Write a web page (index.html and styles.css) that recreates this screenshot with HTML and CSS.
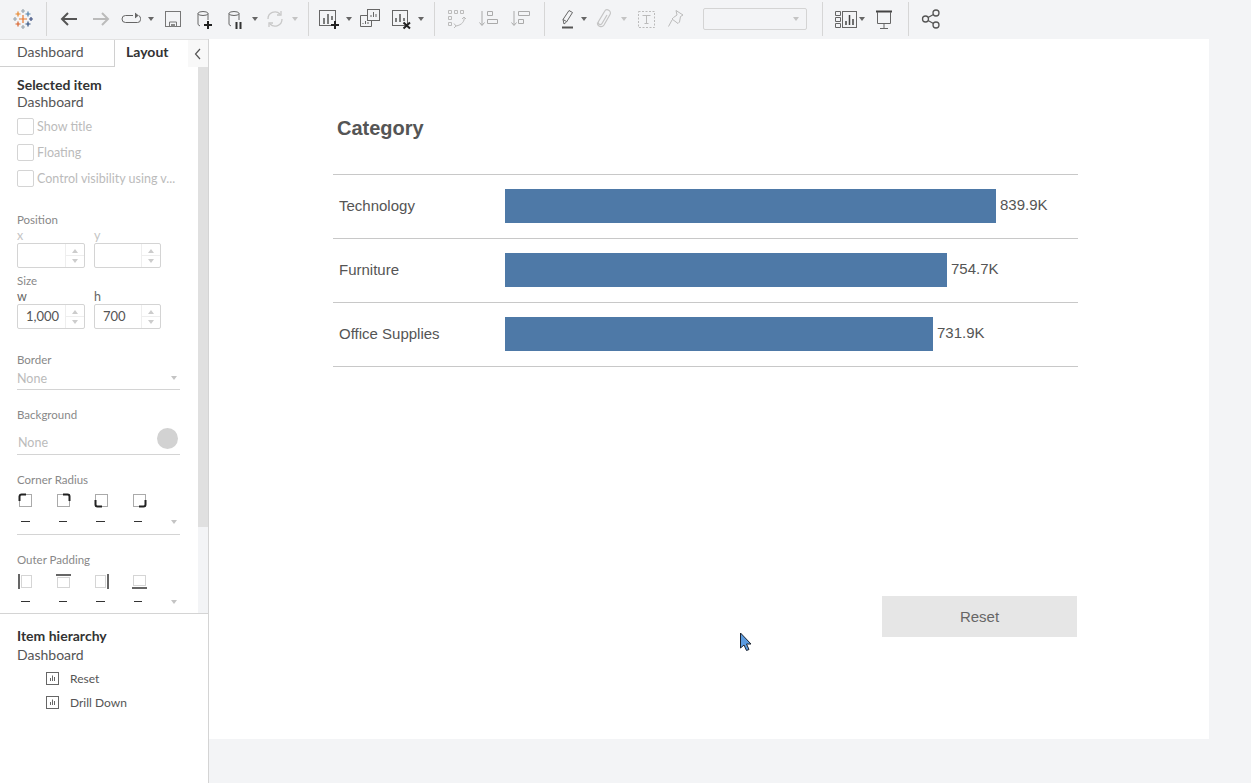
FILE: index.html
```html
<!DOCTYPE html>
<html lang="en">
<head>
    <meta charset="UTF-8">
    <title>Tableau Dashboard Layout</title>
    <link rel="stylesheet" href="styles.css">
</head>
<body>
    <!-- Top toolbar -->
    <div class="toolbar">
        <svg class="icon" viewBox="0 0 24 24" fill="none" stroke-width="1.2">
            <path d="M12 8v8M8 12h8" stroke="#e8762c"/>
            <path d="M12 2v4M10 4h4" stroke="#9aa5ad"/>
            <path d="M7 4.500v5M4.500 7h5" stroke="#e8862c"/>
            <path d="M17 4.500v5M14.500 7h5" stroke="#4f7fa8"/>
            <path d="M20 10v4M18 12h4" stroke="#3c4f80"/>
            <path d="M17 14.500v5M14.500 17h5" stroke="#2f4f7f"/>
            <path d="M12 18v4M10 20h4" stroke="#9aa5ad"/>
            <path d="M7 14.500v5M4.500 17h5" stroke="#d9622b"/>
            <path d="M4 10v4M2 12h4" stroke="#9aa5ad"/>
        </svg>
        <span class="sep"></span>
        <svg class="icon" viewBox="0 0 24 24" fill="none" stroke="#555" stroke-width="2"><path d="M20 12H5M11 6l-6 6 6 6"/></svg>
        <svg class="icon" viewBox="0 0 24 24" fill="none" stroke="#bbb" stroke-width="2"><path d="M4 12h15M13 6l6 6-6 6"/></svg>
        <svg class="icon" viewBox="0 0 24 24" fill="none" stroke="#666"><path d="M14 8.500H6.500a3.500 3.500 0 0 0 0 7h12a3 3 0 0 0 3-3v-1a3 3 0 0 0-2-3"/><path d="M16 6l3 2.500-3 2.500" fill="#666"/></svg>
        <span class="caret"></span>
        <svg class="icon" viewBox="0 0 24 24" fill="none" stroke="#777"><rect x="4.500" y="4.500" width="15" height="15"/><path d="M8.500 19.500v-4.500h7v4.500"/><path d="M10 17h4v2.500h-4z" fill="#888" stroke="none"/></svg>
        <svg class="icon" viewBox="0 0 24 24" fill="none" stroke="#666"><ellipse cx="11" cy="6.500" rx="5" ry="2"/><path d="M6 6.500v11l2 1.500M16 6.500V13"/><path d="M16 14v8M12 18h8" stroke="#222" stroke-width="2"/></svg>
        <svg class="icon" viewBox="0 0 24 24" fill="none" stroke="#666"><ellipse cx="11" cy="6.500" rx="5" ry="2"/><path d="M6 6.500v11l2 1.500M16 6.500V13"/><path d="M13.500 15v7M17.500 15v7" stroke="#333" stroke-width="2"/></svg>
        <span class="caret"></span>
        <svg class="icon" viewBox="0 0 24 24" fill="none" stroke="#c8c8c8" stroke-width="1.300"><path d="M5 12a7 7 0 0 1 12-5M19 12a7 7 0 0 1-12 5"/><path d="M14 8h4V4M10 16H6v4"/></svg>
        <span class="caret off"></span>
        <span class="sep"></span>
        <svg class="icon" viewBox="0 0 24 24" fill="none" stroke="#666"><rect x="2.500" y="3.500" width="16" height="15"/><path d="M7 11v6M11 7v10M15 9v4" stroke="#555" stroke-width="1.500"/><path d="M18 14v8M14 18h8" stroke="#222" stroke-width="2"/></svg>
        <span class="caret"></span>
        <svg class="icon" viewBox="0 0 24 24" fill="none" stroke="#666"><rect x="9.500" y="2.500" width="12" height="11" fill="#f3f4f6"/><path d="M13 10V8M15.500 10V5M18 10V7"/><path d="M9 8.500H2.500v11h11V14"/><path d="M5 17v-1M7.500 17v-3M10 17v-2"/></svg>
        <svg class="icon" viewBox="0 0 24 24" fill="none" stroke="#666"><rect x="3.500" y="3.500" width="15" height="15"/><path d="M7 15v-4M11 15V7M15 14v-3" stroke="#555" stroke-width="1.500"/><path d="M14.500 15.500l6.500 6M21 15.500l-6.500 6" stroke="#222" stroke-width="2"/></svg>
        <span class="caret"></span>
        <span class="sep"></span>
        <svg class="icon" viewBox="0 0 24 24" fill="none" stroke="#bbb"><path d="M4.500 3.500h3v3h-3zM10.500 3.500h3v3h-3zM16.500 3.500h3v3h-3zM4.500 9.500h3v3h-3zM4.500 15.500h3v3h-3z"/><path d="M20 10c1 4-2 8-8 9M10 16.500l2 2.500-2 2M18 12l2-2 2 2"/></svg>
        <svg class="icon" viewBox="0 0 24 24" fill="none" stroke="#aaa"><path d="M6 4v14M3.500 15.500L6 18.500l2.500-3"/><path d="M11.500 4.500h5v4h-5zM11.500 12.500h10v4h-10z"/></svg>
        <svg class="icon" viewBox="0 0 24 24" fill="none" stroke="#aaa"><path d="M6 4v14M3.500 15.500L6 18.500l2.500-3"/><path d="M10.500 4.500h11v4h-11zM10.500 12.500h5v4h-5z"/></svg>
        <span class="sep"></span>
        <svg class="icon" viewBox="0 0 24 24" fill="none" stroke="#666"><path d="M9 17l-1-4.500 6-9 3.500 2-6 9.500zM8 12.500l3.500 2"/><path d="M7 20.500h11" stroke="#555" stroke-width="2"/></svg>
        <span class="caret"></span>
        <svg class="icon" viewBox="0 0 24 24" fill="none" stroke="#c4c4c4" stroke-width="1.200"><path d="M15 8l-5 8.500a2 2 0 0 1-3.500-2l6-10a3 3 0 0 1 5.500 3l-6 10.500c-2 3-7 1.500-6.500-2.500"/></svg>
        <span class="caret off"></span>
        <svg class="icon" viewBox="0 0 24 24" fill="none" stroke="#bbb"><rect x="4.500" y="4.500" width="16" height="16" stroke-dasharray="2 1.500"/><path d="M8.500 8.500h8M12.500 8.500v8M10.500 16.500h4"/></svg>
        <svg class="icon" viewBox="0 0 24 24" fill="none" stroke="#bbb"><path d="M12 3.500l7 4.500-2.500 1.500-1 5.500-1.500 1.500-6-4.500 1.500-1.500 3.500-2.500zM8 13l-3.500 6.500"/></svg>
        <div class="combo"><span class="caret off"></span></div>
        <span class="sep"></span>
        <svg class="icon" viewBox="0 0 24 24" fill="none" stroke="#666"><path d="M1.500 4.500h5v4h-5zM1.500 10.500h5v4h-5zM1.500 16.500h5v4h-5z"/><rect x="8.500" y="4.500" width="14" height="16"/><path d="M12 18v-4M15.500 18V8M19 18v-6" stroke="#444" stroke-width="1.500"/></svg>
        <span class="caret"></span>
        <svg class="icon" viewBox="0 0 24 24" fill="none" stroke="#666"><path d="M4 4.500h16" stroke="#444" stroke-width="2"/><path d="M5.500 5v11.500h13V5M12 16.500V22M8 21.500h8"/></svg>
        <span class="sep"></span>
        <svg class="icon" viewBox="0 0 24 24" fill="none" stroke="#555" stroke-width="1.300"><circle cx="6.500" cy="12" r="3"/><circle cx="17" cy="6" r="3"/><circle cx="17" cy="18" r="3"/><path d="M9 10.500l5.500-3M9 13.500l5.500 3"/></svg>
    </div>

    <div class="workspace">
        <!-- Left panel -->
        <aside class="sidebar">
            <div class="tabs">
                <div class="tab">Dashboard</div>
                <div class="tab active">Layout</div>
                <div class="collapse">
                    <svg width="8" height="12" viewBox="0 0 8 12" fill="none" stroke="#555" stroke-width="1.200"><path d="M6 1L1.500 6 6 11"/></svg>
                </div>
            </div>

            <div class="panel">
                <div class="panel-body">
                    <div class="heading">Selected item</div>
                    <div class="item-name">Dashboard</div>

                    <label class="check">Show title</label>
                    <label class="check">Floating</label>
                    <label class="check">Control visibility using v...</label>

                    <div class="group-label position-label">Position</div>
                    <div class="fields">
                        <div class="field">
                            <span class="axis off">x</span>
                            <div class="stepper"></div>
                        </div>
                        <div class="field">
                            <span class="axis off">y</span>
                            <div class="stepper"></div>
                        </div>
                    </div>
                    <div class="group-label size-label">Size</div>
                    <div class="fields">
                        <div class="field">
                            <span class="axis">w</span>
                            <div class="stepper">1,000</div>
                        </div>
                        <div class="field">
                            <span class="axis">h</span>
                            <div class="stepper">700</div>
                        </div>
                    </div>

                    <div class="group-label border-label">Border</div>
                    <div class="select-line border-line">None<span class="caret off"></span></div>

                    <div class="group-label background-label">Background</div>
                    <div class="select-line background-line">None<span class="swatch"></span></div>

                    <div class="group-label radius-label">Corner Radius</div>
                    <div class="sides radius-icons">
                        <svg class="side" viewBox="0 0 15 15" fill="none"><rect x="1.500" y="1.500" width="12" height="12" stroke="#555" stroke-dasharray="1 1"/><path d="M1.500 8V3.500a2 2 0 0 1 2-2H8" stroke="#222" stroke-width="2"/></svg>
                        <svg class="side" viewBox="0 0 15 15" fill="none"><rect x="1.500" y="1.500" width="12" height="12" stroke="#555" stroke-dasharray="1 1"/><path d="M7 1.500h4.500a2 2 0 0 1 2 2V8" stroke="#222" stroke-width="2"/></svg>
                        <svg class="side" viewBox="0 0 15 15" fill="none"><rect x="1.500" y="1.500" width="12" height="12" stroke="#555" stroke-dasharray="1 1"/><path d="M1.500 7v4.500a2 2 0 0 0 2 2H8" stroke="#222" stroke-width="2"/></svg>
                        <svg class="side" viewBox="0 0 15 15" fill="none"><rect x="1.500" y="1.500" width="12" height="12" stroke="#555" stroke-dasharray="1 1"/><path d="M7 13.500h4.500a2 2 0 0 0 2-2V7" stroke="#222" stroke-width="2"/></svg>
                    </div>
                    <div class="dashes radius-dashes">
                        <span class="dash"></span><span class="dash"></span><span class="dash"></span><span class="dash"></span><span class="caret off"></span>
                    </div>

                    <div class="group-label padding-label">Outer Padding</div>
                    <div class="sides padding-icons">
                        <svg class="side" viewBox="0 0 15 15" fill="none"><rect x="3.500" y="1.500" width="10" height="12" stroke="#aaa" stroke-dasharray="1 1"/><path d="M1 0v15" stroke="#666" stroke-width="2"/></svg>
                        <svg class="side" viewBox="0 0 15 15" fill="none"><rect x="1.500" y="3.500" width="12" height="10" stroke="#aaa" stroke-dasharray="1 1"/><path d="M0 1h15" stroke="#666" stroke-width="2"/></svg>
                        <svg class="side" viewBox="0 0 15 15" fill="none"><rect x="1.500" y="1.500" width="10" height="12" stroke="#aaa" stroke-dasharray="1 1"/><path d="M14 0v15" stroke="#666" stroke-width="2"/></svg>
                        <svg class="side" viewBox="0 0 15 15" fill="none"><rect x="1.500" y="1.500" width="12" height="10" stroke="#aaa" stroke-dasharray="1 1"/><path d="M0 14h15" stroke="#666" stroke-width="2"/></svg>
                    </div>
                    <div class="dashes padding-dashes">
                        <span class="dash"></span><span class="dash"></span><span class="dash"></span><span class="dash"></span><span class="caret off"></span>
                    </div>
                </div>
                <div class="scrollbar"><div class="thumb"></div></div>
            </div>

            <div class="hierarchy">
                <div class="heading">Item hierarchy</div>
                <div class="item-name">Dashboard</div>
                <div class="tree-item">
                    <svg class="sheet" viewBox="0 0 13 13" fill="none" stroke="#666"><rect x="0.500" y="0.500" width="12" height="12"/><path d="M4.500 9V6M6.500 9V3.500M8.500 9V5"/></svg>
                    Reset
                </div>
                <div class="tree-item">
                    <svg class="sheet" viewBox="0 0 13 13" fill="none" stroke="#666"><rect x="0.500" y="0.500" width="12" height="12"/><path d="M4.500 9V6M6.500 9V3.500M8.500 9V5"/></svg>
                    Drill Down
                </div>
            </div>
        </aside>

        <!-- Dashboard canvas -->
        <main class="stage">
            <div class="canvas">
                <h1 class="chart-title">Category</h1>
                <div class="chart">
                    <div class="row">
                        <div class="row-label">Technology</div>
                        <div class="bar" style="width: 491px"></div>
                        <div class="value">839.9K</div>
                    </div>
                    <div class="row">
                        <div class="row-label">Furniture</div>
                        <div class="bar" style="width: 442px"></div>
                        <div class="value">754.7K</div>
                    </div>
                    <div class="row">
                        <div class="row-label">Office Supplies</div>
                        <div class="bar" style="width: 428px"></div>
                        <div class="value">731.9K</div>
                    </div>
                </div>
                <div class="reset-button">Reset</div>
                <svg class="pointer" width="14" height="20" viewBox="0 0 14 20"><path d="M1.500 1v15l3.500-3 2.500 5.500 2.500-1-2.500-5.500h4.500z" fill="#5b9be0" stroke="#1c2430"/></svg>
            </div>
        </main>
    </div>
</body>
</html>
```

FILE: styles.css
```css
* {
    box-sizing: border-box;
}

body {
    margin: 0;
    height: 783px;
    overflow: hidden;
    background-color: #f3f4f6;
    font-family: 'Lato', sans-serif;
    font-size: 14px;
    color: #444;
}

/* Toolbar */
.toolbar {
    display: grid;
    grid-template-columns: 35px 11px 32px 30px 28px 14px 31px 31px 28px 12px 28px 17px 9px 28px 13px 31px 28px 17px 10px 32px 32px 36px 11px 25px 12px 28px 14px 30px 39px 119px 12px 24px 14px 36px 11px 24px;
    align-items: center;
    justify-items: start;
    height: 39px;
    padding: 0 0 1px 11px;
}

.icon {
    display: block;
    width: 24px;
    height: 24px;
}

.sep {
    width: 1px;
    height: 34px;
    background-color: #d6d6d6;
}

.caret {
    display: block;
    width: 0;
    height: 0;
    margin-left: 1px;
    border-left: 3px solid transparent;
    border-right: 3px solid transparent;
    border-top: 4px solid #666;
}

.caret.off {
    border-top-color: #c4c4c4;
}

.combo {
    display: flex;
    justify-content: flex-end;
    align-items: center;
    width: 104px;
    height: 22px;
    padding-right: 7px;
    background-color: #f3f4f6;
    border: 1px solid #d4d4d4;
    border-radius: 2px;
}

/* Layout */
.workspace {
    display: flex;
    height: 744px;
}

.sidebar {
    display: flex;
    flex-direction: column;
    width: 209px;
    background-color: white;
    border-right: 1px solid #d4d4d4;
}

.tabs {
    display: flex;
    height: 28px;
    border-top: 1px solid #e2e2e2;
}

.tab {
    width: 114px;
    padding: 3px 0 0 17px;
    border-bottom: 1px solid #d0d0d0;
    color: #555;
}

.tab.active {
    width: 74px;
    padding-left: 11px;
    border-left: 1px solid #d0d0d0;
    border-bottom: none;
    font-weight: bold;
    color: #333;
}

.collapse {
    display: flex;
    align-items: center;
    justify-content: center;
    width: 20px;
    background-color: #f8f8f8;
}

.panel {
    display: flex;
    height: 547px;
    border-bottom: 1px solid #d4d4d4;
}

.panel-body {
    flex: 1;
    padding: 9px 18px 0 17px;
    overflow: hidden;
}

.scrollbar {
    width: 10px;
    background-color: #f3f4f6;
}

.thumb {
    height: 460px;
    background-color: #e0e0e0;
}

.heading {
    height: 17px;
    line-height: 17px;
    font-weight: bold;
    color: #333;
}

.item-name {
    height: 17px;
    line-height: 17px;
    color: #555;
}

.check {
    display: flex;
    align-items: center;
    gap: 3px;
    height: 15px;
    margin-top: 11px;
    font-size: 12.5px;
    color: #bbb;
    white-space: nowrap;
}

.check::before {
    content: "";
    flex: none;
    width: 15px;
    height: 15px;
    border: 1px solid #d4d4d4;
    border-radius: 2px;
}

.item-name + .check {
    margin-top: 9px;
}

.group-label {
    height: 14px;
    line-height: 14px;
    font-size: 11.5px;
    color: #888;
}

.position-label {
    margin-top: 27px;
    margin-bottom: 1px;
}

.size-label {
    margin-top: 6px;
    margin-bottom: 1px;
}

.border-label {
    margin-top: 24px;
}

.background-label,
.radius-label,
.padding-label {
    margin-top: 18px;
}

.fields {
    display: flex;
    gap: 9px;
}

.field {
    display: flex;
    flex-direction: column;
}

.axis {
    height: 15px;
    line-height: 15px;
    font-size: 12.5px;
    color: #666;
}

.axis.off {
    color: #c4c4c4;
}

.stepper {
    position: relative;
    width: 68px;
    height: 25px;
    padding-left: 8px;
    font-size: 13px;
    line-height: 23px;
    color: #555;
    border: 1px solid #d4d4d4;
    border-radius: 2px;
    background:
        linear-gradient(#eee, #eee) right 18px top 0 / 1px 100% no-repeat,
        linear-gradient(#eee, #eee) right 0 center / 18px 1px no-repeat;
}

/* spinner arrows of the number boxes */
.stepper::before {
    content: "";
    position: absolute;
    top: 5px;
    right: 6px;
    border-left: 3px solid transparent;
    border-right: 3px solid transparent;
    border-bottom: 4px solid #ccc;
}

.stepper::after {
    content: "";
    position: absolute;
    bottom: 4px;
    right: 6px;
    border-left: 3px solid transparent;
    border-right: 3px solid transparent;
    border-top: 4px solid #ccc;
}

.field + .field .stepper {
    width: 67px;
}

.select-line {
    display: flex;
    justify-content: space-between;
    width: 163px;
    font-size: 12.5px;
    line-height: 15px;
    color: #bbb;
    border-bottom: 1px solid #d4d4d4;
}

.border-line {
    align-items: center;
    height: 23px;
    padding-right: 3px;
}

.background-line {
    align-items: flex-end;
    height: 33px;
    padding: 0 2px 4px 1px;
}

.swatch {
    width: 21px;
    height: 21px;
    margin-bottom: 1px;
    border-radius: 50%;
    background-color: #d2d2d2;
}

.sides {
    display: flex;
    gap: 23px;
    padding-left: 1px;
}

.side {
    display: block;
    width: 15px;
    height: 15px;
}

.radius-icons {
    margin-top: 6px;
}

.padding-icons {
    margin-top: 7px;
}

.dashes {
    display: flex;
    align-items: center;
    gap: 29px;
    width: 163px;
    padding-left: 4px;
}

.dash {
    width: 9px;
    height: 1px;
    background-color: #333;
}

.dashes .caret {
    margin-left: auto;
    margin-right: 3px;
    margin-top: 2px;
}

.radius-dashes {
    height: 27px;
    border-bottom: 1px solid #d4d4d4;
}

.padding-dashes {
    height: 24px;
}

.hierarchy {
    padding: 13px 0 0 17px;
}

.hierarchy .heading {
    height: 18px;
}

.hierarchy .item-name {
    height: 19px;
    line-height: 19px;
    margin-bottom: 2px;
}

.tree-item {
    display: flex;
    align-items: center;
    gap: 11px;
    height: 24px;
    padding-left: 29px;
    font-size: 12px;
    color: #555;
}

.sheet {
    display: block;
    width: 13px;
    height: 13px;
}

/* Canvas */
.stage {
    flex: 1;
}

.canvas {
    position: relative;
    width: 1000px;
    height: 700px;
    padding: 0 0 0 124px;
    background-color: white;
    font-family: 'Liberation Sans', Arial, sans-serif;
}

.chart-title {
    margin: 0;
    padding: 78px 0 0 4px;
    height: 135px;
    line-height: 23px;
    font-size: 20px;
    font-weight: bold;
    color: #555;
}

.chart {
    width: 745px;
    border-top: 1px solid #c8c8c8;
}

.row {
    display: flex;
    align-items: center;
    height: 64px;
    border-bottom: 1px solid #c8c8c8;
}

.row-label {
    width: 172px;
    margin-bottom: 2px;
    padding: 0 0 0 6px;
    font-size: 15px;
    color: #555;
}

.bar {
    height: 34px;
    margin-bottom: 1px;
    background-color: #4e79a7;
}

.value {
    margin-left: 4px;
    margin-bottom: 4px;
    font-size: 15px;
    color: #555;
}

.reset-button {
    width: 195px;
    height: 41px;
    margin: 229px 0 0 549px;
    line-height: 41px;
    text-align: center;
    font-size: 15px;
    color: #666;
    background-color: #e6e6e6;
}

.pointer {
    position: absolute;
    left: 530px;
    top: 593px;
}
```
